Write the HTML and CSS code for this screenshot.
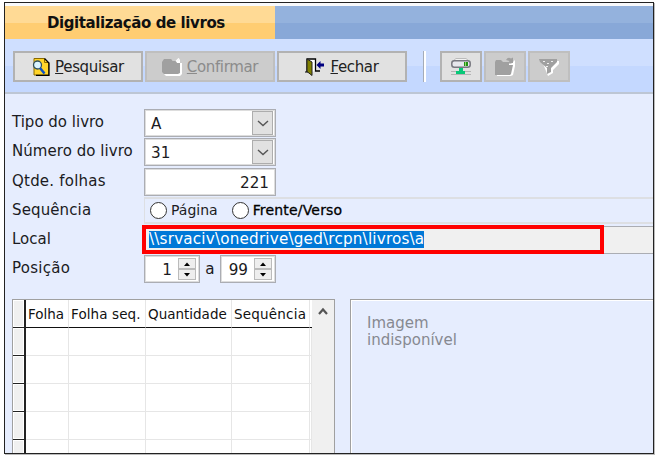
FILE: index.html
```html
<!DOCTYPE html>
<html lang="pt-BR">
<head>
<meta charset="utf-8">
<title>Digitalização de livros</title>
<link rel="stylesheet" href="styles.css">
</head>
<body>
<main class="window">
  <header class="tabs"><div class="tab"><span class="t t-tab">Digitalização de livros</span></div></header>
  <nav class="toolbar">
    <button class="btn">
      <svg width="18" height="18" viewBox="0 0 18 18"><path d="M2 1h11l4 4v12H2z" fill="#ffd42a"/><path d="M2 .5h10.500v4h4V17H2z" fill="none" stroke="#8a6a00"/><path d="M12.500 .5l4.500 4.500V17.300H4" fill="none" stroke="#000" stroke-width="1.300"/><circle cx="5.500" cy="7" r="4" fill="#d9f4ff" stroke="#31505c" stroke-width="1.300"/><path d="M8 10l4.500 5.500" stroke="#0a50c8" stroke-width="2.500"/></svg>
      <span class="t t-pesq"><u>P</u>esquisar</span>
    </button>
    <button class="btn off">
      <svg width="20" height="18" viewBox="0 0 20 18"><path d="M2 4l3-2h5l2 2h2l4-3v4h2v11l-2 2H4l-2-2z" fill="#fff"/><path d="M0 4l2-3h7l2 2h3l1 2h3v10l-2 1H2l-2-2z" fill="#a0a0a0"/><path d="M14 3.500l3-3" stroke="#fff" stroke-width="1.500"/></svg>
      <span class="t t-conf"><u>C</u>onfirmar</span>
    </button>
    <button class="btn">
      <svg width="20" height="18" viewBox="0 0 20 18"><path d="M2 14V1h8.500v12H15" fill="#fff" stroke="#000" stroke-width="1.300"/><path d="M0 14h3" stroke="#000"/><path d="M2 1l5 3v13.500l-5-4z" fill="#808000" stroke="#222"/><path d="M11.500 7l4-4v2.500h3.500v3h-3.500V11z" fill="#000080"/></svg>
      <span class="t t-fech"><u>F</u>echar</span>
    </button>
    <i class="sep"></i>
    <button class="btn sq">
      <svg width="20" height="18" viewBox="0 0 20 18"><path d="M2 3l3-2.500h10L18 3" fill="#f2f2f2" stroke="#bbb"/><rect x=".8" y="2.800" width="18.400" height="6.400" rx="2.500" fill="#e6e6ec" stroke="#77777f" stroke-width="1.500"/><path d="M13 4h4v4h-4z" fill="#248f16"/><path d="M14.500 4v4" stroke="#8fdc62"/><path d="M0 13.500h20M0 16.500h20" stroke="#b4b4b4"/><path d="M8 10h4v3h2v3H5v-3h3z" fill="#08c878"/></svg>
    </button>
    <button class="btn sq off">
      <svg width="22" height="20" viewBox="0 0 22 20"><path d="M2 5h7l2 2h6l4-4v6l-2 9-2 1H3z" fill="#fff"/><path d="M1 5l1-2h5l2 2h6v3h4l-2 9-1 1H1zM12 3q2-3.500 5-1.500l2-1V6h-5l1.500-2z" fill="#a0a0a0"/></svg>
    </button>
    <button class="btn sq off">
      <svg width="20" height="18" viewBox="0 0 20 18"><path d="M3 3h17v3l-6 6v3l-5 3z" fill="#fff"/><path d="M0 1h18v3l-6 6v4l-4 2v-6L1 4z" fill="#a0a0a0"/><path d="M4 3.500h2M8 5.500h2M12 3.500h2M7 8.500h2" stroke="#eee"/></svg>
    </button>
  </nav>
  <section class="form">
    <div class="row"><label class="lab l1">Tipo do livro</label><div class="box"><span class="t val">A</span><span class="drop"><svg width="12" height="7" viewBox="0 0 12 7"><path d="M1 1l5 4.500L11 1" fill="none" stroke="#555" stroke-width="1.400"/></svg></span></div></div>
    <div class="row"><label class="lab l2">Número do livro</label><div class="box"><span class="t val">31</span><span class="drop"><svg width="12" height="7" viewBox="0 0 12 7"><path d="M1 1l5 4.500L11 1" fill="none" stroke="#555" stroke-width="1.400"/></svg></span></div></div>
    <div class="row"><label class="lab l3">Qtde. folhas</label><div class="box num"><span class="t val">221</span></div></div>
    <div class="row"><label class="lab l4">Sequência</label><div class="radios"><i class="radio"></i><span class="t t-pag">Página</span><i class="radio r2"></i><span class="t t-fre">Frente/Verso</span></div></div>
    <div class="row"><label class="lab l5">Local</label><div class="path"><div class="mark"><span class="t sel">\\srvaciv\onedrive\ged\rcpn\livros\a</span></div></div></div>
    <div class="row"><label class="lab l6">Posição</label>
      <div class="box spin"><span class="t val">1</span><span class="ud"><b><svg width="8" height="4"><path d="M1 4l3-3.500L7 4z"/></svg></b><b><svg width="8" height="4"><path d="M1 0l3 3.500L7 0z"/></svg></b></span></div>
      <span class="t to">a</span>
      <div class="box spin"><span class="t val">99</span><span class="ud"><b><svg width="8" height="4"><path d="M1 4l3-3.500L7 4z"/></svg></b><b><svg width="8" height="4"><path d="M1 0l3 3.500L7 0z"/></svg></b></span></div>
    </div>
  </section>
  <section class="lower">
    <div class="grid">
      <div class="cells">
        <i class="g"></i><span class="h"><span class="t h1">Folha</span></span><span class="h"><span class="t h2">Folha seq.</span></span><span class="h"><span class="t h3">Quantidade</span></span><span class="h"><span class="t h4">Sequência</span></span><i class="h"></i>
        <i class="g"></i><i></i><i></i><i></i><i></i><i></i>
        <i class="g"></i><i></i><i></i><i></i><i></i><i></i>
        <i class="g"></i><i></i><i></i><i></i><i></i><i></i>
        <i class="g"></i><i></i><i></i><i></i><i></i><i></i>
        <i class="g"></i><i></i><i></i><i></i><i></i><i></i>
      </div>
      <div class="scroll"><svg width="10" height="9" viewBox="0 0 10 9"><path d="M1 7l4-4.500L9 7" fill="none" stroke="#555" stroke-width="2.200"/></svg></div>
    </div>
    <div class="preview"><span class="t p1">Imagem</span><span class="t p2">indisponível</span></div>
  </section>
</main>
</body>
</html>
```
FILE: styles.css
```css
* { box-sizing: border-box; }
body { margin: 0; width: 656px; height: 456px; padding: 2px 0 0 4px; background: #fff; overflow: hidden; font-family: "DejaVu Sans", sans-serif; font-size: 15.200px; color: #1b1b22; }
.window { width: 650px; height: 452px; border: 1px solid #222; background: #e6edfe; overflow: hidden; display: flex; flex-direction: column; box-shadow: 1px 1px 0 #bbb; }
.t, .lab { display: block; white-space: nowrap; line-height: 20px; }
i { font-style: normal; }
.tabs { flex: none; height: 36px; border-top: 3px solid #f8f9fb; background: linear-gradient(#94b2dd 0 17px, #88a8d8 17px); }
.tab { width: 270px; height: 33px; padding: 7px 0 0 42px; background: linear-gradient(#ffda95 0 17px, #ffcd72 17px); }
.t-tab { font-weight: bold; font-size: 15px; color: #111; letter-spacing: -0.41px; }
.toolbar { flex: none; height: 55px; display: flex; align-items: flex-start; padding: 12px 0 0 8px; border-bottom: 2px solid #bdc6d4; background: linear-gradient(#cfdfff 0 27px, #c4d8ff 27px); }
.btn { width: 130px; height: 31px; margin-right: 2px; padding: 0; border: 2px solid #b2b2b2; background: #e1e1e1; display: flex; align-items: center; justify-content: center; gap: 5px; font: inherit; font-size: 15px; letter-spacing: -0.35px; color: #222; }
.btn .t { padding-top: 1px; }
.btn.off { background: #ccc; border-color: #bfbfbf; color: #8b8b8b; }
.btn.sq { width: 42px; }
.sep { width: 3px; height: 31px; margin: 0 14px; border-left: 1px solid #a5acb8; border-right: 2px solid #fff; }
.form { flex: none; height: 205px; padding-top: 15px; }
.row { display: flex; height: 29.300px; }
.lab { width: 132px; padding: 2px 0 0 7px; flex: none; font-size: 15px; line-height: 22px; }
.l2 { letter-spacing: 0.05px; }
.l3 { letter-spacing: 0.22px; }
.l4 { letter-spacing: 0.12px; }
.l6 { letter-spacing: 0.28px; }
.box { width: 132px; height: 28px; border: 1px solid #abadb3; box-shadow: inset 0 0 0 1px #ddd; background: #fff; display: flex; align-items: center; justify-content: space-between; padding: 0 2px 0 6px; margin-left: 7px; }
.val { padding-top: 2px; }
.drop { width: 21px; height: 24px; border: 1px solid #adadad; background: #e1e1e1; display: flex; align-items: center; justify-content: center; }
.num { justify-content: flex-end; padding-right: 6px; }
.radios { margin-left: 7px; flex: 1; height: 27px; border: 1px solid #dddfe3; border-width: 2px 0 2px 1px; display: flex; align-items: center; padding-left: 5px; font-size: 14px; }
.radio { width: 17px; height: 17px; border: 1.500px solid #333; border-radius: 50%; background: #fff; margin-right: 4px; }
.r2 { margin-left: 14px; }
.t-fre { color: #000; -webkit-text-stroke: 0.3px #000; letter-spacing: 0.18px; }
.path { margin-left: 7px; flex: 1; height: 28px; border: 1px solid #abadb3; border-right: 0; background: #f0f0f0; }
.mark { width: 462px; height: 29px; margin: -2px 0 0 -3px; border: 4px solid #f00; padding: 2px 0 0 3px; display: flex; }
.sel { background: #0078d7; color: #fff; height: 17px; line-height: 17px; letter-spacing: 0.19px; }
.spin { width: 56px; padding: 0 3px 0 0; justify-content: flex-end; gap: 6px; }
.to { width: 20px; text-align: center; padding-top: 4px; }
.to + .spin { margin-left: 0; }
.ud { width: 18px; height: 22px; display: flex; flex-direction: column; }
.ud b { flex: 1; border: 1px solid #bbb; background: #eee; display: flex; align-items: center; justify-content: center; }
.ud svg { display: block; }
.lower { flex: 1; display: flex; padding-left: 7px; gap: 15px; min-height: 0; }
.grid { width: 323px; border: 1px solid #a0a0a0; border-bottom: 0; background: #fff; display: flex; overflow: hidden; }
.cells { width: 299px; display: grid; grid-template-columns: 13px 43px 77px 86px 78px 2px; grid-template-rows: 28px repeat(5, 28px); }
.cells > * { border-right: 1px solid #e6e6e6; border-bottom: 1px solid #e6e6e6; }
.cells .g { background: #f0f0f0; border-right: 2px solid #222; border-bottom: 1px solid #222; box-shadow: inset 0 0 0 1px #fff; }
.cells .h { border-bottom: 1px solid #111; padding: 4px 0 0 2px; font-size: 13.500px; color: #111; }
.h2 { letter-spacing: 0.1px; }
.h4 { letter-spacing: 0.2px; }
.scroll { flex: 1; background: #f0f0f0; display: flex; justify-content: center; padding-top: 7px; }
.preview { flex: 1; border: 1px solid #a0a0a0; border-right: 0; border-bottom: 0; box-shadow: inset 1px 1px #fff; padding: 15px 0 0 16px; color: #868991; font-size: 15px; }
.preview .t { line-height: 17px; }
```
